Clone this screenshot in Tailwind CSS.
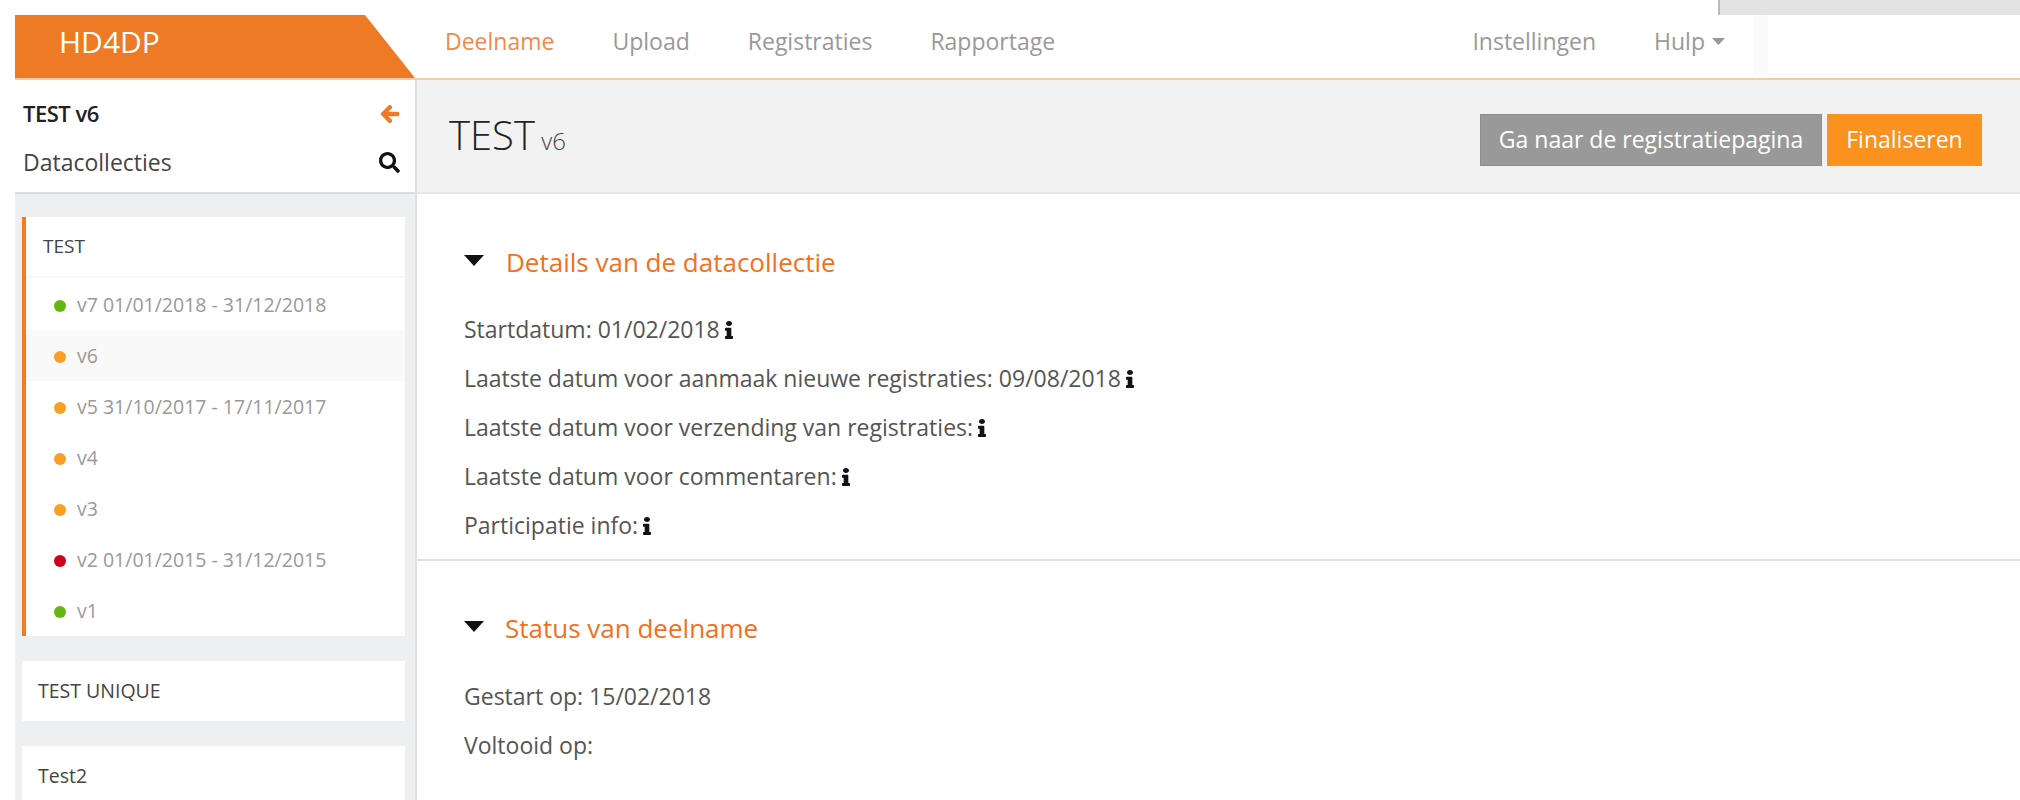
<!DOCTYPE html>
<html lang="nl">
<head>
<meta charset="utf-8">
<title>HD4DP</title>
<script src="https://cdn.jsdelivr.net/npm/@tailwindcss/browser@4"></script>
</head>
<body class="bg-white font-['Open_Sans',sans-serif] text-[#555] overflow-hidden">
<div class="relative w-[2020px] h-[800px] overflow-hidden pl-[15px] pt-[15px]">
  <div class="absolute top-0 right-0 w-[302px] h-[15px] bg-[#e3e3e3] border-l-2 border-[#bbb]"></div>

  <header class="flex h-[65px] border-b-2 border-[#f9c8a5]">
    <div class="w-[400px] h-[63px] bg-[#ee7a25] [clip-path:polygon(0_0,350px_0,100%_100%,0_100%)] flex items-center pl-[44px] pb-[10px] text-white text-[30px] leading-none shrink-0">HD4DP</div>
    <nav class="flex items-center pl-[30px] pb-[10px] gap-[58px] text-[23px] text-[#999] w-[1339px] shrink-0">
      <span class="text-[#f08a4b]">Deelname</span>
      <span>Upload</span>
      <span>Registraties</span>
      <span>Rapportage</span>
      <span class="ml-auto">Instellingen</span>
      <span class="flex items-center gap-[7px] mr-[29px]">Hulp
        <svg class="w-[13px] h-[7px]" viewBox="0 0 13 7"><path d="M0 0h13L6.500 7z" fill="#999"/></svg>
      </span>
    </nav>
    <div class="flex-1 h-[60px] border-l-[14px] border-b-2 border-[#fafafa]"></div>
  </header>

  <div class="flex h-[720px]">
    <aside class="w-[402px] shrink-0 border-r-2 border-[#dfe0e2] bg-[#eeeff1] flex flex-col">
      <div class="h-[114px] shrink-0 bg-white border-b-2 border-[#dcdcdc] pl-[8px] pr-[15px] flex flex-col">
        <div class="h-[49px] mt-[9px] flex items-center justify-between text-[22px] font-semibold text-[#222] tracking-[-0.5px]">
          <span>TEST v6</span>
          <svg class="w-[20px] h-[20px]" viewBox="0 0 448 512"><path fill="#ee7a25" stroke="#ee7a25" stroke-width="30" d="M257.500 445.100l-22.200 22.200c-9.400 9.400-24.600 9.400-33.900 0L7 273c-9.400-9.400-9.400-24.600 0-33.900L201.400 44.700c9.400-9.400 24.600-9.400 33.900 0l22.200 22.200c9.500 9.500 9.300 25-.4 34.300L136.600 216H424c13.300 0 24 10.700 24 24v32c0 13.300-10.700 24-24 24H136.600l120.500 114.800c9.800 9.300 10 24.800.4 34.300z"/></svg>
        </div>
        <div class="h-[49px] flex items-center justify-between text-[23px] text-[#444]">
          <span>Datacollecties</span>
          <svg class="w-[21px] h-[21px]" viewBox="0 0 512 512"><path fill="#111" d="M505 442.700L405.300 343c-4.500-4.500-10.600-7-17-7H372c27.600-35.300 44-79.700 44-128C416 93.100 322.900 0 208 0S0 93.100 0 208s93.100 208 208 208c48.300 0 92.700-16.400 128-44v16.300c0 6.400 2.500 12.500 7 17l99.700 99.700c9.400 9.400 24.600 9.400 33.900 0l28.300-28.300c9.400-9.400 9.400-24.600.1-34zM208 336c-70.700 0-128-57.200-128-128 0-70.700 57.200-128 128-128 70.700 0 128 57.200 128 128 0 70.700-57.200 128-128 128z"/></svg>
        </div>
      </div>
      <div class="pl-[7px] pr-[10px] pt-[23px] flex flex-col gap-[25px]">
        <section class="bg-white border-l-4 border-[#f47b20]">
          <div class="h-[61px] flex items-center pl-[17px] text-[19px] text-[#444] border-b-2 border-[#f8f8f8]">TEST</div>
          <ul class="text-[19.500px] text-[#999] flex flex-col">
            <li class="h-[51px] mt-[1px] flex items-center gap-[11px] pl-[28px]"><span class="w-[12px] h-[12px] rounded-full bg-[#62b810] mt-[3px]"></span>v7 01/01/2018 - 31/12/2018</li>
            <li class="h-[51px] flex items-center gap-[11px] pl-[28px] bg-[#f9f9f9]"><span class="w-[12px] h-[12px] rounded-full bg-[#fa9f25] mt-[3px]"></span>v6</li>
            <li class="h-[51px] flex items-center gap-[11px] pl-[28px]"><span class="w-[12px] h-[12px] rounded-full bg-[#fa9f25] mt-[3px]"></span>v5 31/10/2017 - 17/11/2017</li>
            <li class="h-[51px] flex items-center gap-[11px] pl-[28px]"><span class="w-[12px] h-[12px] rounded-full bg-[#fa9f25] mt-[3px]"></span>v4</li>
            <li class="h-[51px] flex items-center gap-[11px] pl-[28px]"><span class="w-[12px] h-[12px] rounded-full bg-[#fa9f25] mt-[3px]"></span>v3</li>
            <li class="h-[51px] flex items-center gap-[11px] pl-[28px]"><span class="w-[12px] h-[12px] rounded-full bg-[#d0021b] mt-[3px]"></span>v2 01/01/2015 - 31/12/2015</li>
            <li class="h-[51px] flex items-center gap-[11px] pl-[28px]"><span class="w-[12px] h-[12px] rounded-full bg-[#62b810] mt-[3px]"></span>v1</li>
          </ul>
        </section>
        <section class="bg-white h-[60px] shrink-0 flex items-center pl-[16px] text-[19.500px] text-[#444]">TEST UNIQUE</section>
        <section class="bg-white h-[60px] shrink-0 flex items-center pl-[16px] text-[19.500px] text-[#444]">Test2</section>
      </div>
    </aside>

    <main class="flex-1 flex flex-col">
      <div class="h-[114px] bg-[#f2f2f2] border-b-2 border-[#e8e8e8] pl-[32px] pr-[38px] flex items-center justify-between shrink-0">
        <h1 class="text-[40px] font-light text-[#222] leading-none -mt-[3px]">TEST <small class="text-[24px] text-[#444] -ml-[4px]">v6</small></h1>
        <div class="flex gap-[5px] text-[23px] text-white mt-[7px]">
          <button class="h-[52px] w-[342px] bg-[#999] border border-[#8e8e8e]">Ga naar de registratiepagina</button>
          <button class="h-[52px] w-[155px] bg-[#fb9220]">Finaliseren</button>
        </div>
      </div>

      <section class="h-[367px] border-b-2 border-[#e2e2e2] pl-[47px] pt-[41px] shrink-0">
        <h2 class="flex items-center gap-[22px] h-[54px] text-[26px] font-medium text-[#f37021]">
          <svg class="w-[20px] h-[11px] -mt-[3px]" viewBox="0 0 20 11"><path d="M0 0h20L10 11z" fill="#111"/></svg>
          Details van de datacollectie
        </h2>
        <div class="mt-[16px] text-[23px] flex flex-col">
          <p class="h-[49px] flex items-center gap-[5px]">Startdatum: 01/02/2018 <svg class="w-[8px] h-[18px]" viewBox="0 0 192 512" preserveAspectRatio="none"><path fill="#111" d="M20 424.229h20V279.771H20c-11.046 0-20-8.954-20-20V212c0-11.046 8.954-20 20-20h112c11.046 0 20 8.954 20 20v212.229h20c11.046 0 20 8.954 20 20V492c0 11.046-8.954 20-20 20H20c-11.046 0-20-8.954-20-20v-47.771c0-11.046 8.954-20 20-20zM96 0C56.235 0 24 32.235 24 72s32.235 72 72 72 72-32.235 72-72S135.764 0 96 0z"/></svg></p>
          <p class="h-[49px] flex items-center gap-[5px]">Laatste datum voor aanmaak nieuwe registraties: 09/08/2018 <svg class="w-[8px] h-[18px]" viewBox="0 0 192 512" preserveAspectRatio="none"><path fill="#111" d="M20 424.229h20V279.771H20c-11.046 0-20-8.954-20-20V212c0-11.046 8.954-20 20-20h112c11.046 0 20 8.954 20 20v212.229h20c11.046 0 20 8.954 20 20V492c0 11.046-8.954 20-20 20H20c-11.046 0-20-8.954-20-20v-47.771c0-11.046 8.954-20 20-20zM96 0C56.235 0 24 32.235 24 72s32.235 72 72 72 72-32.235 72-72S135.764 0 96 0z"/></svg></p>
          <p class="h-[49px] flex items-center gap-[5px]">Laatste datum voor verzending van registraties: <svg class="w-[8px] h-[18px]" viewBox="0 0 192 512" preserveAspectRatio="none"><path fill="#111" d="M20 424.229h20V279.771H20c-11.046 0-20-8.954-20-20V212c0-11.046 8.954-20 20-20h112c11.046 0 20 8.954 20 20v212.229h20c11.046 0 20 8.954 20 20V492c0 11.046-8.954 20-20 20H20c-11.046 0-20-8.954-20-20v-47.771c0-11.046 8.954-20 20-20zM96 0C56.235 0 24 32.235 24 72s32.235 72 72 72 72-32.235 72-72S135.764 0 96 0z"/></svg></p>
          <p class="h-[49px] flex items-center gap-[5px]">Laatste datum voor commentaren: <svg class="w-[8px] h-[18px]" viewBox="0 0 192 512" preserveAspectRatio="none"><path fill="#111" d="M20 424.229h20V279.771H20c-11.046 0-20-8.954-20-20V212c0-11.046 8.954-20 20-20h112c11.046 0 20 8.954 20 20v212.229h20c11.046 0 20 8.954 20 20V492c0 11.046-8.954 20-20 20H20c-11.046 0-20-8.954-20-20v-47.771c0-11.046 8.954-20 20-20zM96 0C56.235 0 24 32.235 24 72s32.235 72 72 72 72-32.235 72-72S135.764 0 96 0z"/></svg></p>
          <p class="h-[49px] flex items-center gap-[5px]">Participatie info: <svg class="w-[8px] h-[18px]" viewBox="0 0 192 512" preserveAspectRatio="none"><path fill="#111" d="M20 424.229h20V279.771H20c-11.046 0-20-8.954-20-20V212c0-11.046 8.954-20 20-20h112c11.046 0 20 8.954 20 20v212.229h20c11.046 0 20 8.954 20 20V492c0 11.046-8.954 20-20 20H20c-11.046 0-20-8.954-20-20v-47.771c0-11.046 8.954-20 20-20zM96 0C56.235 0 24 32.235 24 72s32.235 72 72 72 72-32.235 72-72S135.764 0 96 0z"/></svg></p>
        </div>
      </section>

      <section class="pl-[47px] pt-[40px]">
        <h2 class="flex items-center gap-[21px] h-[54px] text-[26px] font-medium text-[#f37021]">
          <svg class="w-[20px] h-[11px] -mt-[3px]" viewBox="0 0 20 11"><path d="M0 0h20L10 11z" fill="#111"/></svg>
          Status van deelname
        </h2>
        <div class="mt-[17px] text-[23px] flex flex-col">
          <p class="h-[49px] flex items-center">Gestart op: 15/02/2018</p>
          <p class="h-[49px] flex items-center">Voltooid op:</p>
        </div>
      </section>
    </main>
  </div>
</div>
</body>
</html>
